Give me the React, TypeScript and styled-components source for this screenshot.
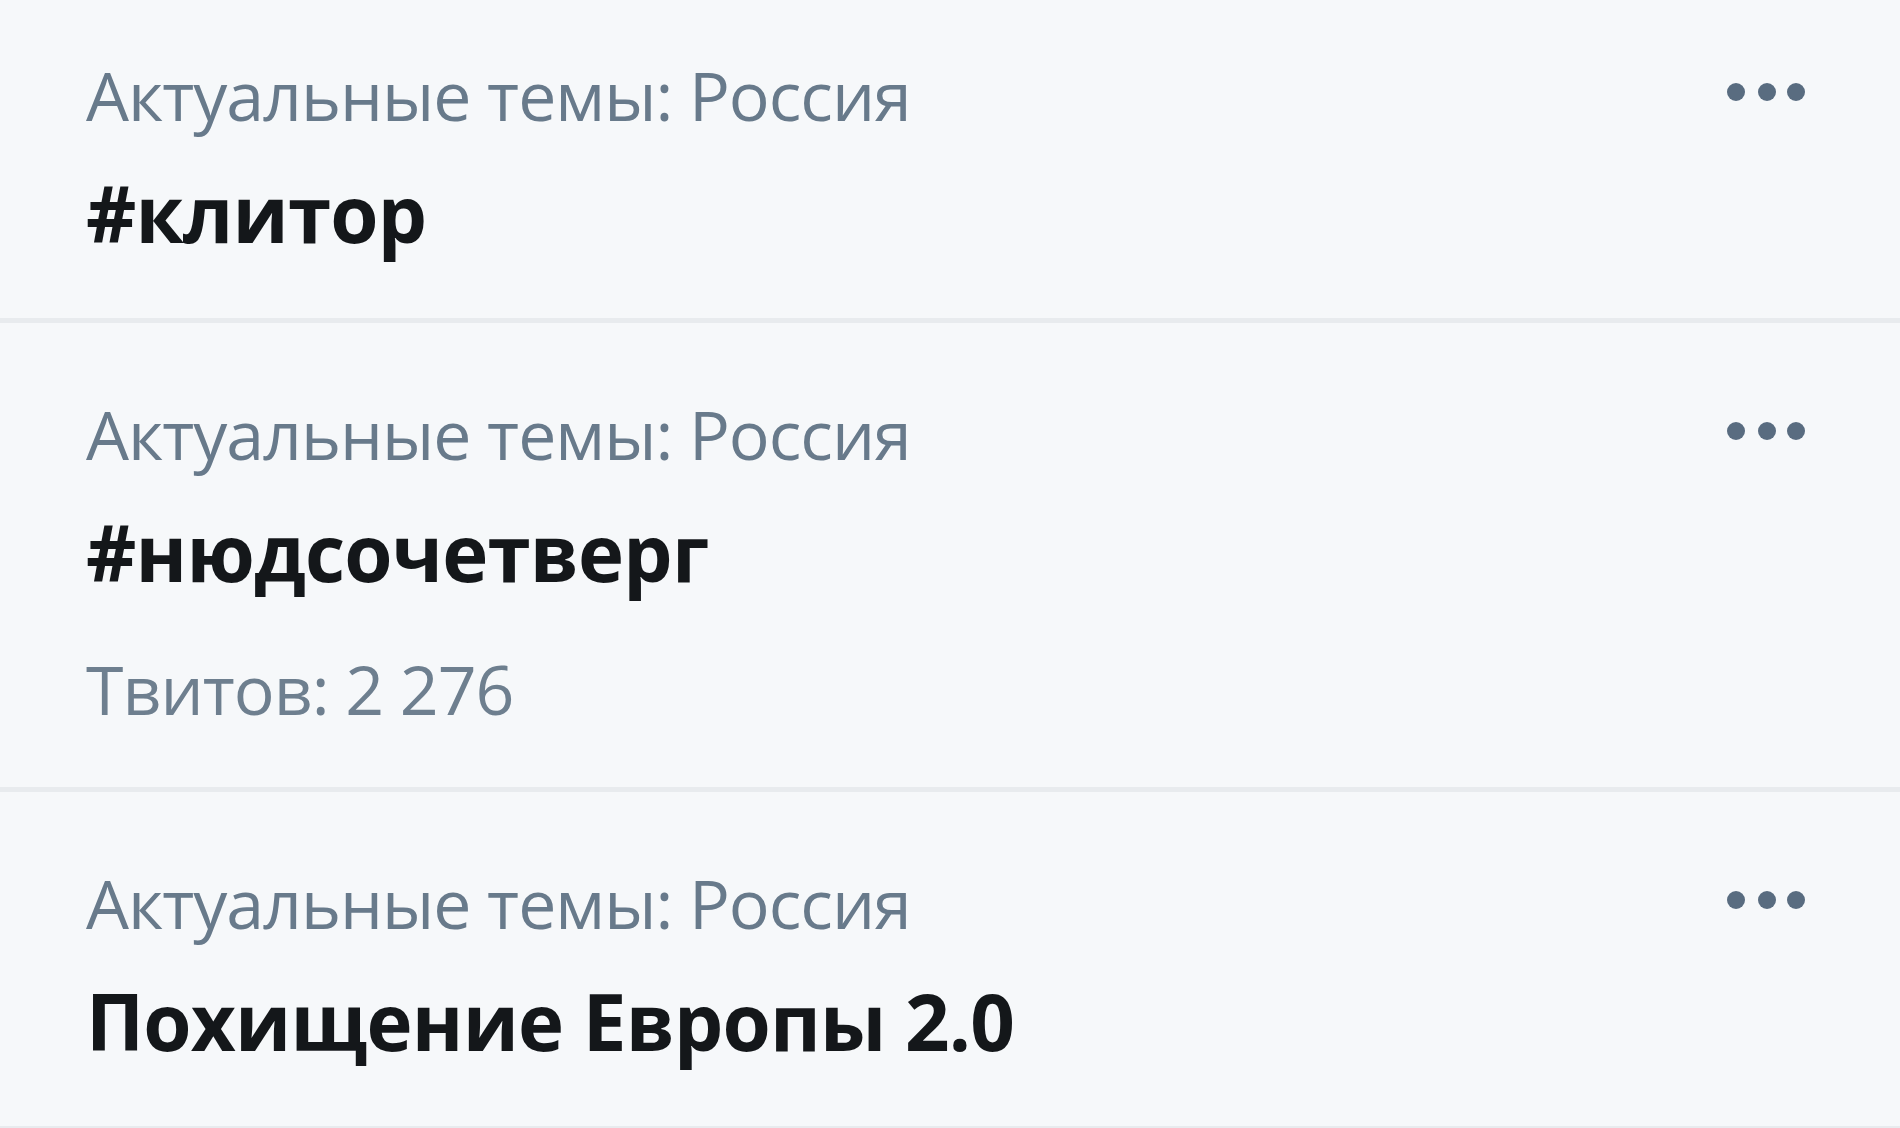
import React from 'react';
import styled, { createGlobalStyle } from 'styled-components';

const GlobalStyle = createGlobalStyle`
	html, body {
		margin: 0;
		padding: 0;
		background: #f6f8fa;
	}
	body {
		font-family: "Open Sans", "Noto Sans", sans-serif;
		overflow: hidden;
	}
`;

const List = styled.div`
	width: 1900px;
	height: 1128px;
	background: #f6f8fa;
	overflow: hidden;
`;

const Item = styled.div`
	display: flex;
	align-items: flex-start;
	padding: 66px 95px 54px 86px;
	border-bottom: 5px solid #e8ebee;

	&:first-child {
		padding-top: 50px;
	}
`;

const Body = styled.div`
	flex: 1;
	display: flex;
	flex-direction: column;
`;

const Context = styled.div`
	font-size: 68px;
	line-height: 89px;
	letter-spacing: -1px;
	color: #687a8b;
`;

const Name = styled.div`
	margin-top: 23px;
	font-size: 78px;
	line-height: 102px;
	font-weight: 700;
	letter-spacing: -0.8px;
	color: #14171a;
`;

const Count = styled.div`
	margin-top: 41px;
	font-size: 68px;
	line-height: 89px;
	letter-spacing: -1px;
	color: #6e7f8f;
`;

const MoreBtn = styled.button`
	display: flex;
	align-items: center;
	justify-content: center;
	margin-top: 30px;
	padding: 0;
	border: none;
	background: transparent;
	color: #596c80;
	cursor: pointer;
`;

function MoreIcon() {
	return (
		<svg width="78" height="24" viewBox="0 0 78 24">
			<circle cx="9" cy="12" r="9" fill="currentColor" />
			<circle cx="40" cy="12" r="9" fill="currentColor" />
			<circle cx="69" cy="12" r="9" fill="currentColor" />
		</svg>
	);
}

type Trend = { context: string; name: string; tweets?: string };

const trends: Trend[] = [
	{ context: 'Актуальные темы: Россия', name: '#клитор' },
	{ context: 'Актуальные темы: Россия', name: '#нюдсочетверг', tweets: 'Твитов: 2 276' },
	{ context: 'Актуальные темы: Россия', name: 'Похищение Европы 2.0' },
];

function App() {
	return (
		<>
			<GlobalStyle />
			<List>
				{trends.map((t, i) => (
					<Item key={i}>
						<Body>
							<Context>{t.context}</Context>
							<Name>{t.name}</Name>
							{t.tweets && <Count>{t.tweets}</Count>}
						</Body>
						<MoreBtn aria-label="Ещё">
							<MoreIcon />
						</MoreBtn>
					</Item>
				))}
			</List>
		</>
	);
}

export default App;
